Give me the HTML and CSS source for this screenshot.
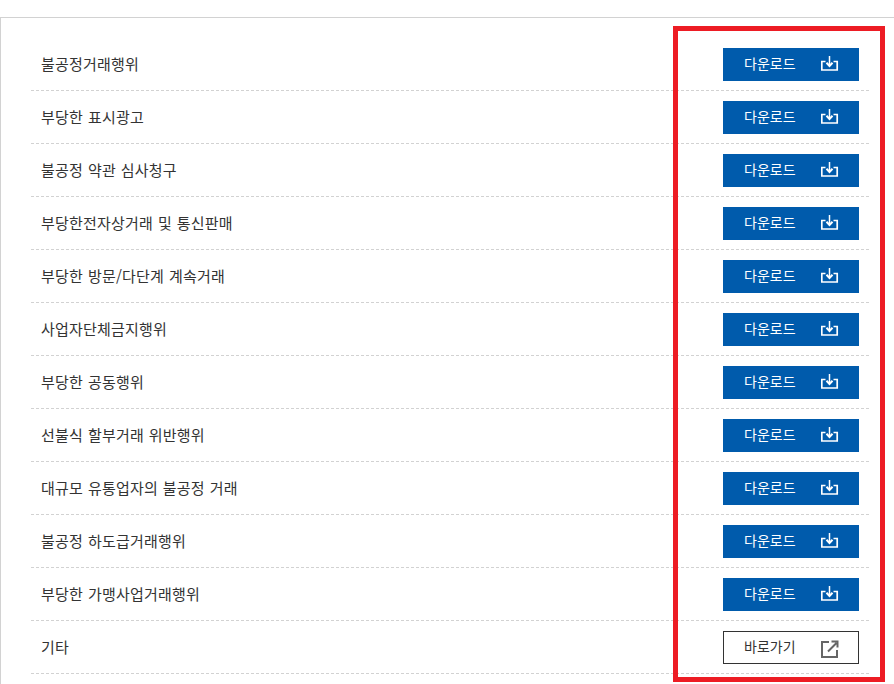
FILE: index.html
```html
<!DOCTYPE html>
<html lang="ko">
<head>
    <meta charset="UTF-8">
    <meta name="viewport" content="width=device-width, initial-scale=1.0">
    <title>신고서 다운로드</title>
    <link rel="stylesheet" href="styles.css">
</head>
<body>
    <svg class="icon-defs" width="0" height="0">
        <symbol id="icon-download" viewBox="0 0 18 16">
            <path d="M8.500 0V9" fill="none" stroke="currentColor" stroke-width="1.500"/>
            <path d="M5.500 6.800 8.500 10 11.500 6.800" fill="none" stroke="currentColor" stroke-width="2"/>
            <path d="M4.500 5.500H.8V14H16.200V5.500H12.500" fill="none" stroke="currentColor" stroke-width="1.700"/>
        </symbol>
        <symbol id="icon-link" viewBox="0 0 18 18">
            <path d="M8 2H1V17H16V10" fill="none" stroke="currentColor" stroke-width="2"/>
            <path d="M7 11.500 15.500 3M10.500 1.500H16.500V7.500" fill="none" stroke="currentColor" stroke-width="2"/>
        </symbol>
    </svg>

    <div class="list">
        <div class="row">
            <span class="name">불공정거래행위</span>
            <a class="btn" href="#"><span class="btn-text">다운로드</span><svg class="ico-down"><use href="#icon-download"/></svg></a>
        </div>
        <div class="row">
            <span class="name">부당한 표시광고</span>
            <a class="btn" href="#"><span class="btn-text">다운로드</span><svg class="ico-down"><use href="#icon-download"/></svg></a>
        </div>
        <div class="row">
            <span class="name">불공정 약관 심사청구</span>
            <a class="btn" href="#"><span class="btn-text">다운로드</span><svg class="ico-down"><use href="#icon-download"/></svg></a>
        </div>
        <div class="row">
            <span class="name">부당한전자상거래 및 통신판매</span>
            <a class="btn" href="#"><span class="btn-text">다운로드</span><svg class="ico-down"><use href="#icon-download"/></svg></a>
        </div>
        <div class="row">
            <span class="name">부당한 방문/다단계 계속거래</span>
            <a class="btn" href="#"><span class="btn-text">다운로드</span><svg class="ico-down"><use href="#icon-download"/></svg></a>
        </div>
        <div class="row">
            <span class="name">사업자단체금지행위</span>
            <a class="btn" href="#"><span class="btn-text">다운로드</span><svg class="ico-down"><use href="#icon-download"/></svg></a>
        </div>
        <div class="row">
            <span class="name">부당한 공동행위</span>
            <a class="btn" href="#"><span class="btn-text">다운로드</span><svg class="ico-down"><use href="#icon-download"/></svg></a>
        </div>
        <div class="row">
            <span class="name">선불식 할부거래 위반행위</span>
            <a class="btn" href="#"><span class="btn-text">다운로드</span><svg class="ico-down"><use href="#icon-download"/></svg></a>
        </div>
        <div class="row">
            <span class="name">대규모 유통업자의 불공정 거래</span>
            <a class="btn" href="#"><span class="btn-text">다운로드</span><svg class="ico-down"><use href="#icon-download"/></svg></a>
        </div>
        <div class="row">
            <span class="name">불공정 하도급거래행위</span>
            <a class="btn" href="#"><span class="btn-text">다운로드</span><svg class="ico-down"><use href="#icon-download"/></svg></a>
        </div>
        <div class="row">
            <span class="name">부당한 가맹사업거래행위</span>
            <a class="btn" href="#"><span class="btn-text">다운로드</span><svg class="ico-down"><use href="#icon-download"/></svg></a>
        </div>
        <div class="row">
            <span class="name">기타</span>
            <a class="btn btn-line" href="#"><span class="btn-text">바로가기</span><svg class="ico-link"><use href="#icon-link"/></svg></a>
        </div>
    </div>

    <div class="highlight"></div>
</body>
</html>
```

FILE: styles.css
```css
html, body {
    height: 100%;
    overflow: hidden;
}

body {
    margin: 0;
    background-color: #fff;
    color: #333;
    font-family: "Noto Sans CJK KR", "Noto Sans", sans-serif;
    font-size: 15px;
}

.icon-defs {
    position: absolute;
}

.list {
    box-sizing: border-box;
    height: calc(100% - 17px);
    margin-top: 17px;
    padding: 20px 25px 0 30px;
    border-top: 1px solid #d2d2d2;
    border-left: 1px solid #d2d2d2;
}

.row {
    display: flex;
    justify-content: space-between;
    align-items: center;
    height: 52px;
    padding: 0 10px;
    border-bottom: 1px dashed #d2d2d2;
}

.name {
    line-height: 20px;
    letter-spacing: 0.2px;
    word-spacing: 0.5px;
}

.btn {
    display: flex;
    justify-content: space-between;
    align-items: center;
    box-sizing: border-box;
    width: 136px;
    height: 33px;
    padding: 0 20px 0 21px;
    background-color: #005bac;
    color: #fff;
    font-size: 14px;
    text-decoration: none;
}

.btn-line {
    padding-right: 19px;
    border: 1px solid #333;
    padding-left: 20px;
    background-color: #fff;
    color: #333;
}

.btn-text {
    padding-bottom: 2px;
}

.ico-down {
    width: 18px;
    height: 16px;
}

.ico-link {
    width: 18px;
    height: 18px;
    margin-top: 3px;
    color: #666;
}

.highlight {
    position: absolute;
    top: 26px;
    left: 673px;
    box-sizing: border-box;
    width: 212px;
    height: 656px;
    border: 5px solid #ed1c24;
}
```
